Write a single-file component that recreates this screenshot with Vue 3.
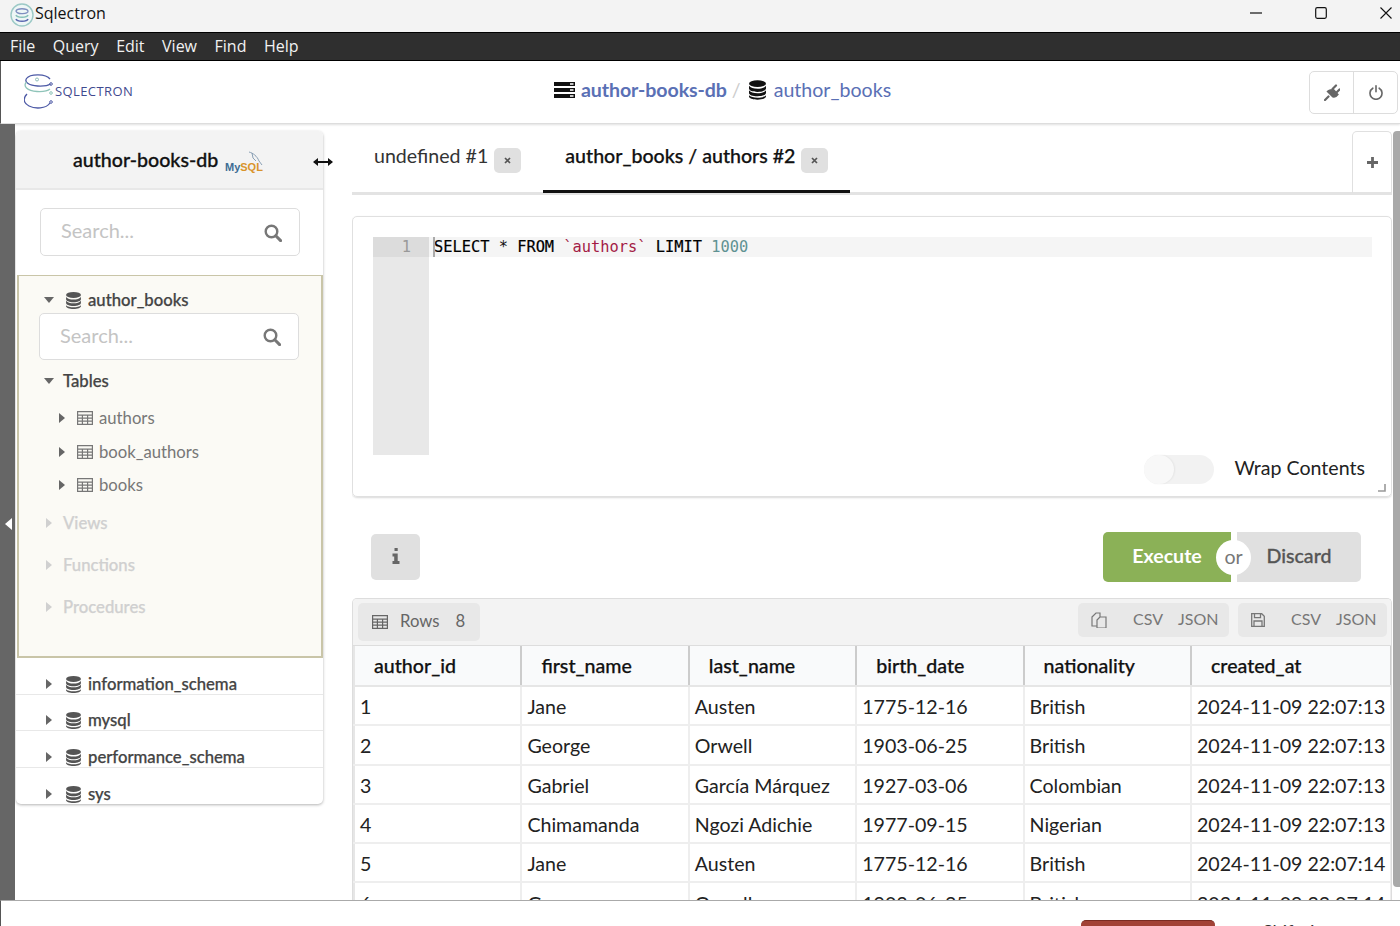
<template>
  <div class="app">
    <svg class="defs" width="0" height="0">
      <symbol id="db" viewBox="0 0 14 16">
        <ellipse cx="7" cy="2.8" rx="7" ry="2.8" />
        <path d="M0 4.6c1 1.6 4 2.4 7 2.4s6-.8 7-2.4v2.2c0 1.5-3 2.8-7 2.8S0 8.3 0 6.8z" />
        <path d="M0 8.8c1 1.6 4 2.4 7 2.4s6-.8 7-2.4V11c0 1.5-3 2.8-7 2.8S0 12.5 0 11z" transform="translate(0 -.6)" />
        <path d="M0 12.4c1 1.3 4 2 7 2s6-.7 7-2v1c0 1.4-3 2.6-7 2.6s-7-1.2-7-2.6z" />
      </symbol>
      <symbol id="grid" viewBox="0 0 16 14">
        <path d="M.6.6h14.8v12.8H.6zM.6 4.2h14.8M.6 7.2h14.8M.6 10.2h14.8M5.4 4.2v9.2M10.6 4.2v9.2" fill="none" stroke="currentColor" stroke-width="1.2" />
      </symbol>
      <symbol id="search" viewBox="0 0 18 18">
        <circle cx="7.5" cy="7.5" r="5.8" fill="none" stroke="currentColor" stroke-width="2.4" />
        <path d="M11.8 11.8l4.8 4.8" stroke="currentColor" stroke-width="3" stroke-linecap="round" />
      </symbol>
    </svg>

    <div class="titlebar">
      <svg class="app-icon" width="24" height="24" viewBox="0 0 24 24">
        <circle cx="12" cy="12" r="11" fill="#eef6f6" stroke="#9cc9c6" stroke-width="1.4" />
        <path d="M6 8c1-3 11-3 12 0s-11 4-12 0z" fill="none" stroke="#7f8fc0" stroke-width="1.3" />
        <path d="M6 12c1 3 11 3 12 0" fill="none" stroke="#86c0b8" stroke-width="1.5" />
        <path d="M6 16c1 3 11 3 12 0" fill="none" stroke="#5b68b0" stroke-width="1.5" />
      </svg>
      <span class="app-name">Sqlectron</span>
      <div class="win-btns">
        <svg width="12" height="12" viewBox="0 0 12 12"><path d="M0 6h12" stroke="#111" stroke-width="1.2" /></svg>
        <svg width="12" height="12" viewBox="0 0 12 12"><rect x=".7" y=".7" width="10.6" height="10.6" rx="1.5" fill="none" stroke="#111" stroke-width="1.2" /></svg>
        <svg width="12" height="12" viewBox="0 0 12 12"><path d="M.5.5l11 11M11.5.5l-11 11" stroke="#111" stroke-width="1.1" /></svg>
      </div>
    </div>

    <div class="menubar">
      <span v-for="m in menus" :key="m">{{ m }}</span>
    </div>

    <div class="header">
      <div class="logo">
        <svg width="30" height="38" viewBox="0 0 30 38">
          <path d="M26 6C22 .5 6 .5 2.5 5.500c-2.500 4 3 7 11 7.500 6 .3 11-.7 13-2" fill="none" stroke="#4d5aa6" stroke-width="1.3" />
          <circle cx="13" cy="6.5" r="1.5" fill="none" stroke="#8fbdb8" />
          <circle cx="27" cy="11" r="1.3" fill="none" stroke="#4d5aa6" />
          <path d="M2.500 9c-4 4 .5 9 10.500 9.500 6 .3 11-.7 13-2.500" fill="none" stroke="#8fc4b9" stroke-width="1.3" />
          <circle cx="27" cy="20" r="1.3" fill="none" stroke="#8fc4b9" />
          <path d="M3 21c-4 4-4 9 2 12 6 3 17 3 21-3" fill="none" stroke="#4d5aa6" stroke-width="1.3" />
          <circle cx="27" cy="29" r="1.3" fill="none" stroke="#4d5aa6" />
        </svg>
        <span class="logo-text">SQLECTRON</span>
      </div>
      <div class="crumbs">
        <svg class="crumb-icon" width="21" height="16" viewBox="0 0 21 16">
          <path d="M0 0h21v4H0zM0 6h21v4H0zM0 12h21v4H0z" fill="#111" />
          <path d="M16 1.3h3.5v1.400H16zM16 7.3h3.5v1.400H16zM16 13.3h3.5v1.400H16z" fill="#fff" />
        </svg>
        <span class="crumb-conn">author-books-db</span>
        <span class="crumb-sep">/</span>
        <svg class="crumb-db" width="17" height="20"><use href="#db" /></svg>
        <span class="crumb-name">author_books</span>
      </div>
      <div class="head-btns">
        <div class="head-btn">
          <svg width="16" height="17" viewBox="0 0 16 17">
            <path d="M1 16l3.500-3.500M4 7.500l5 5c2 .5 3.500-.5 4.500-2L9 5.500c-2 1-4 1-5 2zM8.500 5L12 1.500M12 9l3.500-3.500" stroke="#666" stroke-width="2.2" fill="#666" stroke-linecap="round" />
          </svg>
        </div>
        <div class="head-btn">
          <svg width="14" height="15" viewBox="0 0 14 15">
            <path d="M3.800 3.200a6 6 0 1 0 6.400 0M7 .8v6" fill="none" stroke="#666" stroke-width="1.6" stroke-linecap="round" />
          </svg>
        </div>
      </div>
    </div>

    <div class="content">
      <div class="strip"><span class="strip-arrow"></span></div>

      <aside class="sidebar">
        <div class="conn-head">
          <span>author-books-db</span>
          <svg class="mysql" width="40" height="22" viewBox="0 0 40 22">
            <path d="M24 1c4 1 8 4 10 9l3 4M27 2l1 5 3 3" fill="none" stroke="#8aa0b5" stroke-width="1" />
            <text x="0" y="20" font-size="11" font-weight="700" font-family="Liberation Sans, sans-serif"><tspan fill="#3d6c93">My</tspan><tspan fill="#d9932a">SQL</tspan></text>
          </svg>
        </div>
        <div class="search top-search">
          <span>Search...</span>
          <svg width="18" height="18"><use href="#search" /></svg>
        </div>

        <div class="db-panel">
          <div class="db-row open">
            <i class="caret down"></i>
            <svg class="db-icon" width="15" height="17"><use href="#db" /></svg>
            <span>author_books</span>
          </div>
          <div class="search">
            <span>Search...</span>
            <svg width="18" height="18"><use href="#search" /></svg>
          </div>
          <div class="group-row tables-row">
            <i class="caret down"></i>
            <span>Tables</span>
          </div>
          <div v-for="t in tables" :key="t" class="table-row">
            <i class="caret right"></i>
            <svg width="16" height="14"><use href="#grid" /></svg>
            <span>{{ t }}</span>
          </div>
          <div v-for="g in groups" :key="g" class="group-row muted">
            <i class="caret right"></i>
            <span>{{ g }}</span>
          </div>
        </div>

        <div v-for="d in databases" :key="d" class="db-row closed">
          <i class="caret right"></i>
          <svg class="db-icon" width="15" height="17"><use href="#db" /></svg>
          <span>{{ d }}</span>
        </div>
      </aside>

      <svg class="resize-cursor" width="20" height="10" viewBox="0 0 20 10">
        <path d="M1 5h18" stroke="#111" stroke-width="2" />
        <path d="M0 5l5-4v8zM20 5l-5-4v8z" fill="#111" />
      </svg>

      <main class="main">
        <div class="tabs">
          <div v-for="(t, i) in tabs" :key="t" class="tab" :class="{ active: i === 1 }">
            <span>{{ t }}</span>
            <span class="tab-close">
              <svg width="7" height="7" viewBox="0 0 7 7"><path d="M1 1l5 5M6 1L1 6" stroke="#555" stroke-width="1.7" /></svg>
            </span>
          </div>
          <div class="tab-add">
            <svg width="11" height="11" viewBox="0 0 11 11"><path d="M5.500 0v11M0 5.500h11" stroke="#666" stroke-width="2.8" /></svg>
          </div>
        </div>

        <div class="editor">
          <div class="code">
            <div class="gutter"><div class="gutter-line">1</div></div>
            <div class="lines">
              <div class="line"><b>SELECT</b> * <b>FROM</b> <em>`authors`</em> <b>LIMIT</b> <u>1000</u></div>
            </div>
          </div>
          <div class="wrap-row">
            <span class="toggle"><span class="knob"></span></span>
            <span class="wrap-label">Wrap Contents</span>
          </div>
          <svg class="grip" width="8" height="8" viewBox="0 0 8 8"><path d="M7 0v7H0" fill="none" stroke="#999" stroke-width="1.6" /></svg>
        </div>

        <div class="actions">
          <button class="info-btn">
            <svg width="8" height="16" viewBox="0 0 8 16"><path d="M2.500 0h3.200v3H2.500zM.5 5.500h5.200V13H7.500v3H.5v-3h1.700V8.500H.5z" fill="#666" /></svg>
          </button>
          <div class="run-group">
            <button class="execute">Execute</button>
            <button class="discard">Discard</button>
            <span class="or">or</span>
          </div>
        </div>

        <div class="results">
          <div class="toolbar">
            <div class="chip rows-chip">
              <svg width="16" height="14"><use href="#grid" /></svg>
              <span>Rows</span>
              <span class="count">8</span>
            </div>
            <div class="chip export copy-chip">
              <svg width="16" height="16" viewBox="0 0 16 16">
                <path d="M1 5l4-4h4v4l-3 3v6H1zM6 8l3-3h6v11H6z" fill="none" stroke="#777" stroke-width="1.2" />
              </svg>
              <span class="csv">CSV</span>
              <span>JSON</span>
            </div>
            <div class="chip export">
              <svg width="14" height="14" viewBox="0 0 14 14">
                <path d="M.7.7h10l2.600 2.600v10H.7zM3.500.7v4h6v-4M3 13.300V8h8v5.300" fill="none" stroke="#777" stroke-width="1.3" />
              </svg>
              <span class="csv">CSV</span>
              <span>JSON</span>
            </div>
          </div>
          <table class="grid">
            <thead>
              <tr><th v-for="c in columns" :key="c">{{ c }}</th></tr>
            </thead>
            <tbody>
              <tr v-for="r in rows" :key="r[0]">
                <td v-for="(v, i) in r" :key="i">{{ v }}</td>
              </tr>
            </tbody>
          </table>
        </div>
      </main>

      <div class="scrollbar"></div>
    </div>

    <div class="footer">
      <button class="danger">Cancel</button>
      <span class="foot-text">Shift+Ins</span>
    </div>
  </div>
</template>

<script setup>
const menus = ['File', 'Query', 'Edit', 'View', 'Find', 'Help']
const tables = ['authors', 'book_authors', 'books']
const groups = ['Views', 'Functions', 'Procedures']
const databases = ['information_schema', 'mysql', 'performance_schema', 'sys']
const tabs = ['undefined #1', 'author_books / authors #2']
const columns = ['author_id', 'first_name', 'last_name', 'birth_date', 'nationality', 'created_at']
const rows = [
  [1, 'Jane', 'Austen', '1775-12-16', 'British', '2024-11-09 22:07:13'],
  [2, 'George', 'Orwell', '1903-06-25', 'British', '2024-11-09 22:07:13'],
  [3, 'Gabriel', 'García Márquez', '1927-03-06', 'Colombian', '2024-11-09 22:07:13'],
  [4, 'Chimamanda', 'Ngozi Adichie', '1977-09-15', 'Nigerian', '2024-11-09 22:07:13'],
  [5, 'Jane', 'Austen', '1775-12-16', 'British', '2024-11-09 22:07:14'],
  [6, 'George', 'Orwell', '1903-06-25', 'British', '2024-11-09 22:07:14'],
]
</script>

<style>
html,
body {
  margin: 0;
  overflow: hidden;
}
</style>

<style scoped>
* {
  box-sizing: border-box;
}

.app {
  width: 1400px;
  height: 926px;
  display: flex;
  flex-direction: column;
  overflow: hidden;
  background: #fff;
  font-family: Lato, "Open Sans", sans-serif;
  color: #222;
}

.defs {
  position: absolute;
}

.titlebar {
  height: 32px;
  flex: none;
  display: flex;
  align-items: center;
  background: #f3f3f3;
  padding: 0 0 6px 10px;
}

.app-icon {
  margin-right: 1px;
  margin-top: 3px;
}

.app-name {
  font: 16px "Open Sans", sans-serif;
  color: #111;
}

.win-btns {
  margin-left: auto;
  display: flex;
  gap: 53px;
  margin-right: 8px;
}

.menubar {
  height: 29px;
  flex: none;
  display: flex;
  align-items: center;
  gap: 17.5px;
  padding: 0 0 2px 10px;
  background: #2f2f2f;
  border-top: 1px solid #000;
  border-bottom: 1px solid #000;
  color: #f2f2f2;
  font: 16px "Open Sans", sans-serif;
}

.header {
  height: 63px;
  flex: none;
  display: flex;
  align-items: center;
  border-left: 1px solid #555;
  border-bottom: 1px solid #ddd;
  box-shadow: 0 1px 2px rgba(0, 0, 0, 0.12);
  position: relative;
  background: #fff;
}

.logo {
  width: 553px;
  padding-left: 23px;
  display: flex;
  align-items: center;
  gap: 1px;
}

.logo-text {
  font: 13px "Open Sans", sans-serif;
  color: #3f4a8f;
  letter-spacing: 0.4px;
  margin-bottom: 2px;
}

.crumbs {
  display: flex;
  align-items: center;
  margin-bottom: 5px;
  font-size: 19.6px;
  color: #5a70b5;
}

.crumb-conn {
  margin-left: 6px;
  font-weight: 700;
  letter-spacing: -0.1px;
}

.crumb-sep {
  margin: 0 8px 0 5px;
  color: #ccc;
}

.crumb-db {
  color: #111;
  fill: #111;
}

.crumb-name {
  margin-left: 8px;
}

.head-btns {
  margin-left: auto;
  margin-right: 2px;
  margin-bottom: 0;
  width: 89px;
  height: 43px;
  display: flex;
  border: 1px solid #ddd;
  border-radius: 5px;
}

.head-btn {
  flex: 1;
  display: flex;
  align-items: center;
  justify-content: center;
}

.head-btn + .head-btn {
  border-left: 1px solid #ddd;
}

.content {
  flex: 1;
  min-height: 0;
  display: flex;
  position: relative;
  overflow: hidden;
}

.strip {
  width: 15px;
  flex: none;
  background: #666;
  position: relative;
}

.strip-arrow {
  position: absolute;
  left: 5px;
  top: 394px;
  border-style: solid;
  border-width: 6px 7px 6px 0;
  border-color: transparent #fff transparent transparent;
}

.sidebar {
  width: 307px;
  height: 673px;
  flex: none;
  margin: 7px 0 0 1px;
  border-radius: 5px;
  box-shadow: 0 1px 3px rgba(0, 0, 0, 0.3);
  background: #fff;
}

.conn-head {
  height: 59px;
  display: flex;
  align-items: center;
  padding: 0 0 0 57px;
  background: #f3f3f3;
  border-bottom: 2px solid #e8e8e8;
  border-radius: 5px 5px 0 0;
  font-size: 19.6px;
  font-weight: 500;
  -webkit-text-stroke: 0.3px;
  color: #111;
}

.mysql {
  margin: 4px 0 0 7px;
  -webkit-text-stroke: 0;
}

.search {
  width: 260px;
  height: 48px;
  margin-left: 24px;
  padding: 0 17px 4px 20px;
  display: flex;
  align-items: center;
  justify-content: space-between;
  background: #fff;
  border: 1px solid #ddd;
  border-radius: 5px;
  font-size: 20px;
  color: #c4c4c4;
  flex: none;
}

.search svg {
  color: #777;
  margin-top: 5px;
}

.top-search {
  margin-top: 18px;
  margin-bottom: 19px;
}

.db-panel {
  height: 383px;
  margin-left: 1px;
  padding-top: 11px;
  background: #fbfaf5;
  border: 2px solid #c9c5a8;
  border-width: 1px 2px 2px;
}

.db-panel .search {
  margin-left: 21px;
  height: 47px;
  margin-left: 20px;
}

.caret {
  display: inline-block;
  border-style: solid;
  flex: none;
}

.caret.down {
  border-width: 6px 5px 0;
  border-color: #666 transparent transparent;
}

.caret.right {
  border-width: 5px 0 5px 6px;
  border-color: transparent transparent transparent #666;
}

.db-row {
  display: flex;
  align-items: center;
  font-size: 16.7px;
  font-weight: 500;
  -webkit-text-stroke: 0.25px;
  color: #444;
}

.db-row .caret {
  margin-right: 11px;
}

.db-row .db-icon {
  fill: #555;
  margin-right: 7px;
}

.db-row.open {
  height: 26px;
  padding-left: 25px;
}

.db-row.open .caret.down {
  margin-right: 12px;
}

.db-row.closed {
  height: 36.5px;
  align-items: flex-end;
  padding-left: 30px;
  border-bottom: 1px solid #e8e8e8;
  line-height: 20px;
}

.db-row.closed:last-child {
  border-bottom: none;
  height: 36px;
}

.db-row.closed .caret {
  margin-bottom: 5px;
  margin-right: 14px;
}

.db-row.closed .db-icon {
  margin-bottom: 1px;
}

.group-row {
  height: 42px;
  display: flex;
  align-items: center;
  padding-left: 25px;
  font-size: 16.7px;
  font-weight: 500;
  -webkit-text-stroke: 0.25px;
  color: #444;
}

.group-row .caret {
  margin-right: 9px;
}

.group-row.muted {
  padding-left: 27px;
  color: #d0d0d0;
}

.group-row.muted .caret {
  margin-right: 11px;
  border-left-color: #d0d0d0;
}

.tables-row {
  height: 41px;
}

.table-row {
  height: 33.7px;
  display: flex;
  align-items: center;
  padding-left: 40px;
  font-size: 16.7px;
  color: #777;
}

.table-row svg {
  margin: 0 6px 0 12px;
  color: #777;
}

.resize-cursor {
  position: absolute;
  left: 313px;
  top: 33px;
}

.main {
  width: 1040px;
  flex: none;
  margin-left: 29px;
  padding-top: 7px;
  display: flex;
  flex-direction: column;
  overflow: hidden;
}

.tabs {
  height: 64px;
  flex: none;
  display: flex;
  border-bottom: 3px solid #e3e3e3;
  font-size: 19.6px;
}

.tab {
  padding: 13px 22px 0;
  height: 62px;
  display: flex;
  align-items: flex-start;
  gap: 6px;
  color: #333;
  border-bottom: 3px solid transparent;
}

.tab.active {
  color: #111;
  font-weight: 500;
  -webkit-text-stroke: 0.25px;
  border-bottom-color: #111;
}

.tab-close {
  width: 27px;
  height: 25px;
  margin-top: 4px;
  display: flex;
  align-items: center;
  justify-content: center;
  background: #e0e0e0;
  border-radius: 5px;
}

.tab-add {
  width: 40px;
  height: 62px;
  margin-left: auto;
  display: flex;
  align-items: center;
  justify-content: center;
  border: 1px solid #e0e0e0;
  border-bottom: none;
  border-radius: 5px 5px 0 0;
}

.editor {
  height: 281px;
  flex: none;
  margin-top: 21px;
  padding: 20px 19px 0 20px;
  position: relative;
  border: 1px solid #e0e0e0;
  border-radius: 5px;
  box-shadow: 0 1px 2px rgba(0, 0, 0, 0.15);
}

.code {
  height: 218px;
  display: flex;
  font: 15.35px/20px "DejaVu Sans Mono", monospace;
}

.gutter {
  width: 56px;
  background: #e8e8e8;
}

.gutter-line {
  height: 20px;
  padding-right: 18px;
  text-align: right;
  color: #999;
  background: #dcdcdc;
}

.lines {
  flex: 1;
}

.line {
  height: 20px;
  padding-left: 5px;
  position: relative;
  background: #f5f5f5;
  white-space: pre;
  color: #111;
}

.line::before {
  content: "";
  position: absolute;
  left: 4px;
  top: 0;
  width: 2px;
  height: 20px;
  background: #aaa;
}

.line b {
  font-weight: 400;
  color: #000;
  -webkit-text-stroke: 0.2px;
}

.line em {
  font-style: normal;
  color: #a31b45;
}

.line u {
  text-decoration: none;
  color: #5f9292;
}

.wrap-row {
  height: 29px;
  display: flex;
  align-items: center;
  justify-content: flex-end;
  gap: 20px;
  padding-right: 7px;
  font-size: 19.6px;
  color: #222;
}

.wrap-label {
  margin-bottom: 4px;
}

.toggle {
  width: 70px;
  height: 29px;
  border-radius: 15px;
  background: #f2f2f2;
  display: block;
}

.knob {
  display: block;
  width: 30px;
  height: 29px;
  border-radius: 15px;
  background: #f8f8f8;
  box-shadow: 1px 0 2px rgba(0, 0, 0, 0.06);
}

.grip {
  position: absolute;
  right: 5px;
  bottom: 4px;
}

.actions {
  height: 50px;
  flex: none;
  margin-top: 35px;
  padding: 0 31px 0 19px;
  display: flex;
  align-items: center;
  justify-content: space-between;
}

button {
  font-family: inherit;
  border: none;
  padding: 0;
}

.info-btn {
  width: 49px;
  height: 46px;
  display: flex;
  align-items: center;
  justify-content: center;
  padding-bottom: 2px;
  background: #e0e0e0;
  border-radius: 5px;
}

.run-group {
  display: flex;
  gap: 6px;
  position: relative;
}

.execute,
.discard {
  height: 50px;
  padding-bottom: 4px;
  font-size: 19.6px;
  font-weight: 700;
}

.execute {
  width: 128px;
  background: #8bb157;
  color: #fff;
  border-radius: 5px 0 0 5px;
}

.discard {
  width: 124px;
  background: #e0e0e0;
  color: #555;
  font-weight: 500;
  -webkit-text-stroke: 0.3px;
  border-radius: 0 5px 5px 0;
}

.or {
  position: absolute;
  left: 113px;
  top: 8px;
  width: 35px;
  height: 35px;
  display: flex;
  align-items: center;
  justify-content: center;
  padding-bottom: 3px;
  border-radius: 50%;
  background: #fff;
  color: #777;
  font-size: 19.6px;
}

.results {
  flex: 1;
  min-height: 0;
  margin-top: 16px;
  border: 1px solid #ddd;
  border-bottom: none;
  border-radius: 5px 5px 0 0;
  overflow: hidden;
}

.toolbar {
  height: 47px;
  display: flex;
  align-items: flex-start;
  padding: 4px 4px 0 5px;
  gap: 9px;
  background: #f3f3f3;
  border-bottom: 1px solid #ddd;
  font-size: 16px;
  color: #777;
}

.chip {
  display: flex;
  align-items: center;
  background: #e8e8e8;
  border-radius: 5px;
}

.rows-chip {
  width: 122px;
  height: 38px;
  padding: 0 0 3px 14px;
  margin-right: auto;
  font-size: 16.7px;
  color: #666;
}

.rows-chip svg {
  color: #666;
  margin: 3px 12px 0 0;
}

.rows-chip .count {
  margin-left: 16px;
}

.export {
  height: 34px;
  width: 149px;
  padding: 0 0 3px 13px;
}

.export svg {
  margin-top: 3px;
}

.copy-chip {
  width: 151px;
}

.csv {
  margin: 0 15px 0 26px;
}

.grid {
  width: 1039px;
  border-collapse: collapse;
  table-layout: fixed;
}

.grid th {
  width: 167.4px;
  height: 40px;
  padding: 0 0 0 19px;
  text-align: left;
  font-size: 19.6px;
  font-weight: 500;
  -webkit-text-stroke: 0.25px;
  color: #111;
  background: #f9fafb;
  border-right: 2px solid #ccc;
  border-bottom: 2px solid #e6e6e6;
}

.grid th:last-child {
  width: auto;
}

.grid td {
  height: 39.3px;
  padding: 2px 0 0 5px;
  font-size: 19.6px;
  color: #222;
  border: 2px solid #eee;
  white-space: nowrap;
  overflow: hidden;
}

.grid th:first-child,
.grid td:first-child {
  border-left: 2px solid #e6e6e6;
}

.scrollbar {
  position: absolute;
  right: 0;
  top: 7px;
  width: 7px;
  height: 756px;
  background: #a9a9a9;
  border-radius: 4px 0 0 4px;
}

.footer {
  height: 26px;
  flex: none;
  position: relative;
  background: #fff;
  border-top: 1px solid #aaa;
  border-left: 1px solid #555;
  display: flex;
  padding-left: 1080px;
  overflow: hidden;
}

.danger {
  width: 134px;
  height: 40px;
  margin-top: 19px;
  background: #a24236;
  color: #fff;
  border-radius: 5px;
  border-top: 1px solid #7a2c22;
  font-size: 18px;
}

.foot-text {
  margin: 19px 0 0 48px;
  font-size: 18px;
  color: #333;
}
</style>
